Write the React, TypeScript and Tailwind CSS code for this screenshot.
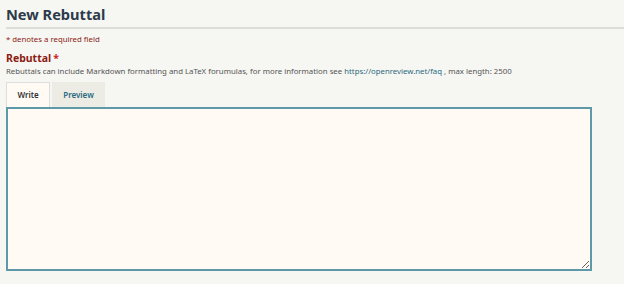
export default function App() {
  return (
    <div className="min-h-[284px] w-[624px] bg-[#f6f6f2] pl-[6px] font-['Noto_Sans',sans-serif]">
      <h1 className="pt-[3px] text-[14.6px] font-bold leading-[22px] text-[#2c3a4a]">New Rebuttal</h1>
      <div className="mt-[2px] h-[2px] bg-[#dcdcd8]" />
      <p className="mt-[3px] text-[7.8px] leading-[14px] text-[#8c1b13]">* denotes a required field</p>

      <div className="mt-[5px]">
        <div className="text-[10.5px] font-bold leading-[14px] text-[#8c1b13]">
          Rebuttal<span className="ml-[2px] text-[#c22]">*</span>
        </div>
        <p className="text-[7.8px] leading-[12px] text-[#555]">
          Rebuttals can include Markdown formatting and LaTeX forumulas, for more information see{' '}
          <span className="text-[#2b6a80]">https://openreview.net/faq</span> , max length: 2500
        </p>

        <div className="mt-[5px] flex gap-[2px] text-[8px] font-semibold">
          <div className="flex h-[25px] w-[44px] items-center justify-center border border-b-0 border-[#ddd] bg-[#fffaf3] text-[#333]">
            Write
          </div>
          <div className="flex h-[25px] w-[53px] items-center justify-center bg-[#ececE4] text-[#2b6a80]">
            Preview
          </div>
        </div>
        <textarea className="block h-[164px] w-[586px] resize-y border-2 border-[#5e99aa] bg-[#fffaf3] outline-none" />
      </div>
    </div>
  )
}
